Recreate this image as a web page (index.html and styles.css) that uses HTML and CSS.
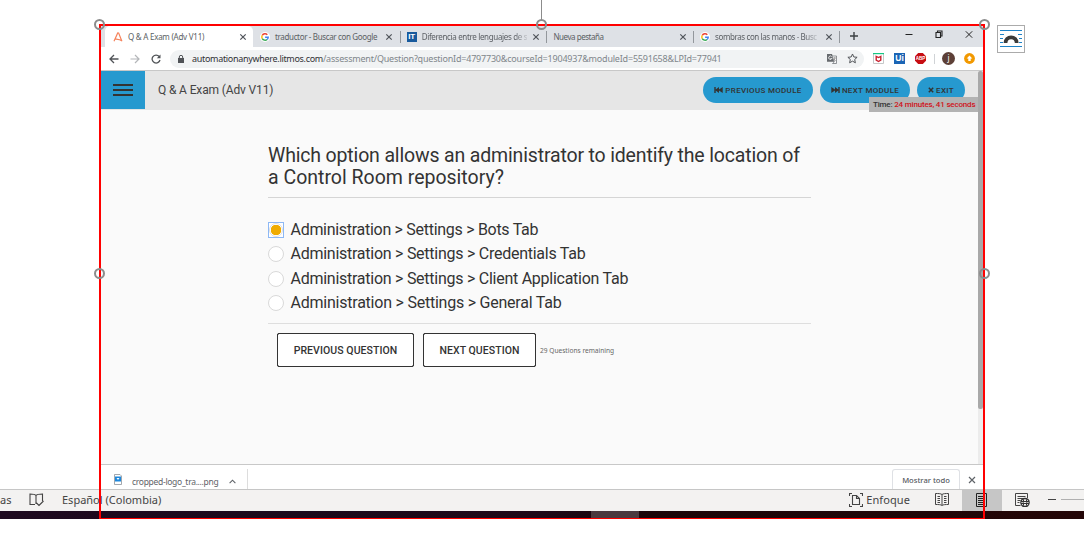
FILE: index.html
```
<!DOCTYPE html>
<html lang="es">
<head>
<meta charset="utf-8">
<title>Q &amp; A Exam (Adv V11)</title>
<link rel="stylesheet" href="styles.css">
</head>
<body>
<svg class="defs" width="0" height="0">
  <symbol id="close" viewBox="0 0 8 8"><path d="M1.3 1.3l5.4 5.4M6.7 1.3L1.3 6.7" fill="none" stroke="#50545a" stroke-width="1.2"/></symbol>
  <symbol id="google" viewBox="0 0 18 18">
    <circle cx="9" cy="9" r="9" fill="#fff"/>
    <g fill="none" stroke-width="2.6"><path d="M13.2 5A5.8 5.8 0 0 0 4 6.2" stroke="#ea4335"/><path d="M4 6.2a5.8 5.8 0 0 0 0 5.6" stroke="#fbbc05"/><path d="M4 11.8a5.8 5.8 0 0 0 8.8 1.6" stroke="#34a853"/><path d="M12.8 13.4A5.8 5.8 0 0 0 14.8 9.4H9.2" stroke="#4285f4"/></g>
  </symbol>
</svg>
<div class="screen">
  <main class="document">
    <div class="browser">
      <div class="tabs">
        <div class="tab active">
          <svg class="fav" viewBox="0 0 10 11"><path d="M.6 10.2L4.7 1l1 .1 3.6 9.1M1.5 7.6c3 .4 5.400.2 7.700 2.200" fill="none" stroke="#f5835c" stroke-width="1.3"/></svg>
          <span class="label t1">Q &amp; A Exam (Adv V11)</span><svg class="x"><use href="#close"/></svg>
        </div>
        <div class="tab sep">
          <svg class="fav"><use href="#google"/></svg>
          <span class="label t2">traductor - Buscar con Google</span><svg class="x"><use href="#close"/></svg>
        </div>
        <div class="tab sep">
          <span class="it">IT</span>
          <span class="label t3 fade">Diferencia entre lenguajes de s</span><svg class="x"><use href="#close"/></svg>
        </div>
        <div class="tab sep">
          <span class="label t4">Nueva pestaña</span><svg class="x"><use href="#close"/></svg>
        </div>
        <div class="tab sep last">
          <svg class="fav"><use href="#google"/></svg>
          <span class="label t5 fade">sombras con las manos - Busc</span><svg class="x"><use href="#close"/></svg>
        </div>
        <svg class="plus" viewBox="0 0 10 10"><path d="M5 1v8M1 5h8" stroke="#3c4043" stroke-width="1.4"/></svg>
        <div class="winbtns">
          <svg width="8" height="9" viewBox="0 0 8 9"><path d="M.5 4.500h7" stroke="#222" stroke-width="1"/></svg>
          <svg width="8" height="9" viewBox="0 0 8 9"><path d="M1 2.500h4.500v5H1zM2.500 2.500v-1.500h4.500v5H5.500" fill="none" stroke="#222" stroke-width="1.100"/></svg>
          <svg width="8" height="9" viewBox="0 0 8 9"><path d="M.8 1.300l6.400 6.400M7.200 1.300L.8 7.700" stroke="#222" stroke-width="1"/></svg>
        </div>
      </div>
      <div class="toolbar">
        <svg class="nav" viewBox="0 0 10 10"><path d="M9.500 5H1.200M5 1L1 5l4 4" fill="none" stroke="#505357" stroke-width="1.300"/></svg>
        <svg class="nav" viewBox="0 0 10 10"><path d="M.5 5h8.300M5 1l4 4-4 4" fill="none" stroke="#b4b6b9" stroke-width="1.200"/></svg>
        <svg class="nav" viewBox="0 0 10 10"><path d="M8.200 2.500A4 4 0 1 0 9 6" fill="none" stroke="#505357" stroke-width="1.300"/><path d="M9.500 .5v3.700H5.800z" fill="#505357"/></svg>
        <div class="omnibox">
          <svg class="lock" viewBox="0 0 6 8"><path d="M0 3h6v5H0z" fill="#505357"/><path d="M1.300 3.500V2a1.700 1.700 0 0 1 3.400 0v1.500" fill="none" stroke="#505357"/></svg>
          <span class="url"><b>automationanywhere.litmos.com</b>/assessment/Question?questionId=4797730&amp;courseId=1904937&amp;moduleId=5591658&amp;LPId=77941</span>
          <svg class="translate" viewBox="0 0 10 10"><path d="M0 0h5l2.400 7.800H0z" fill="#666a6e"/><path d="M5 2h4.500v7.500H5.500L7.300 8z" fill="#f7f7f7" stroke="#777b80" stroke-width=".8"/><path d="M4.700 2.700a1.700 1.700 0 1 0 .2 1.800H3.300" fill="none" stroke="#fff" stroke-width=".8"/><path d="M6.300 4h2.700M7.600 3.300c.2 1.700 0 2.800-1 3.600M6.800 5l1.900 2" fill="none" stroke="#777" stroke-width=".6"/></svg>
          <svg class="star" viewBox="0 0 10 10"><path d="M5 .9l1.200 2.700 3 .3L7 5.900l.6 3L5 7.400 2.400 8.900l.6-3L.8 3.900l3-.3z" fill="none" stroke="#505357" stroke-width=".9"/></svg>
        </div>
        <svg class="ext e1" viewBox="0 0 11 11"><path d="M.5 .5h10v10H.5z" fill="#fff" stroke="#b7babb" stroke-width=".8"/><path d="M0 0h11v1.200H0z" fill="#16c784"/><path d="M3.200 3.300v3.900l2.300 1.300 2.300-1.300V3.300L5.500 4.500z" fill="none" stroke="#c8202f" stroke-width="1.400"/></svg>
        <span class="ui">Ui</span>
        <svg class="ext e3" viewBox="0 0 11 11"><path d="M3.200 0h4.600L11 3.200v4.600L7.800 11H3.200L0 7.800V3.200z" fill="#c70d12"/><text x="5.500" y="7.300" class="abp">ABP</text></svg>
        <span class="bar"></span>
        <span class="avatar">j</span>
        <svg class="ext e4" viewBox="0 0 11 11"><circle cx="5.500" cy="5.500" r="5.400" fill="#f29900"/><path d="M5.500 2.500L8.300 5.500H6.700V8H4.300V5.500H2.700z" fill="#fff"/></svg>
      </div>
      <div class="page">
        <div class="header">
          <div class="burger"><i></i><i></i><i></i></div>
          <h1>Q &amp; A Exam (Adv V11)</h1>
          <div class="modules">
            <div class="pill p1"><svg viewBox="0 0 9 8"><path d="M.3 1h1.400v2.600L5 1v2.600L8.700 1v6L5 4.400V7L1.700 4.400V7H.3z"/></svg><span>PREVIOUS MODULE</span></div>
            <div class="pill p2"><svg viewBox="0 0 9 8"><path d="M8.700 1H7.300v2.600L4 1v2.600L.3 1v6L4 4.400V7l3.300-2.600V7h1.400z"/></svg><span>NEXT MODULE</span></div>
            <div class="pill p3"><svg class="ex" viewBox="0 0 6 8"><path d="M.8 1.800l4.400 4.400M5.200 1.800L.8 6.200" stroke="#333" stroke-width="1.500"/></svg><span>EXIT</span></div>
          </div>
          <div class="timer">Time: <b>24 minutes, 41 seconds</b></div>
        </div>
        <div class="quiz">
          <h2><span class="q1">Which option allows an administrator to identify the location of</span><br><span class="q2">a Control Room repository?</span></h2>
          <div class="answers">
            <label><span class="radio on"><i></i></span><span class="a1">Administration &gt; Settings &gt; Bots Tab</span></label>
            <label><span class="radio"></span><span class="a2">Administration &gt; Settings &gt; Credentials Tab</span></label>
            <label><span class="radio"></span><span class="a3">Administration &gt; Settings &gt; Client Application Tab</span></label>
            <label><span class="radio"></span><span class="a4">Administration &gt; Settings &gt; General Tab</span></label>
          </div>
          <div class="actions">
            <div class="btn b1"><span>PREVIOUS QUESTION</span></div>
            <div class="btn b2"><span>NEXT QUESTION</span></div>
            <span class="remaining">29 Questions remaining</span>
          </div>
        </div>
        <div class="scroll"><i></i></div>
      </div>
      <div class="downloads">
        <svg class="file" viewBox="0 0 8 11"><path d="M.5 .5h5.500l1.500 1.500v8.500H.5z" fill="#fff" stroke="#8b9299" stroke-width=".8"/><path d="M1 2.500h6v5H1z" fill="#1e88dc"/><path d="M2.500 4h3L4 6z" fill="#fff"/></svg>
        <span class="fname">cropped-logo_tra....png</span>
        <svg class="chev" viewBox="0 0 7 5"><path d="M.6 4.200L3.500 1.200l2.900 3" fill="none" stroke="#5f6368" stroke-width="1.100"/></svg>
        <span class="dsep"></span>
        <div class="showall"><span>Mostrar todo</span></div>
        <svg class="x dx" viewBox="0 0 8 8"><path d="M1 1l6 6M7 1L1 7" stroke="#5f6368" stroke-width="1.200"/></svg>
      </div>
    </div>
    <div class="layout-btn">
      <svg width="26" height="26" viewBox="0 0 26 26"><path d="M2 4.500h22M2 20.500h22M2 8.500h4M20 8.500h4M2 12.500h3M21 12.500h3M2 16.500h3M21 16.500h3" stroke="#1e83c8"/><path d="M7.500 17c0-3.500 2.500-5.700 5.600-5.700s5.600 2.200 5.600 5.700" fill="none" stroke="#3b3a39" stroke-width="3.800"/></svg>
    </div>
  </main>
  <div class="status">
    <span class="as">as</span>
    <svg class="proof" width="15" height="14" viewBox="0 0 15 14"><path d="M7 2.500C6 1 4 1 1 1v10.500h5M7 2.500V11M7 2.500C8 1 10 1 13.500 1v7M6.500 9l3.500 3.500L14.500 8" fill="none" stroke="#444" stroke-width="1.100"/></svg>
    <span class="lang">Español (Colombia)</span>
    <svg class="focus" width="14" height="14" viewBox="0 0 14 14"><path d="M3 .5H.5V3M11 .5h2.500V3M3 13.500H.5V11M11 13.500h2.500V11M3.500 2.500h4L10.500 5.500v6h-7zM7.500 2.500v3h3" fill="none" stroke="#444" stroke-width="1.100"/></svg>
    <span class="enf">Enfoque</span>
    <svg class="read" width="14" height="13" viewBox="0 0 14 13"><path d="M7 1.500C6 .5 3 .5 .5 .5v11c2.500 0 5.500 0 6.500 1 1-1 4-1 6.500-1V.5C11 .5 8 .5 7 1.500zV12M2.500 3.500H5M2.500 5.500H5M2.500 7.500H5M2.500 9.500H5M9 3.500h2.500M9 5.500h2.500M9 7.500h2.500M9 9.500h2.500" fill="none" stroke="#444"/></svg>
    <div class="print"><svg width="11" height="14" viewBox="0 0 11 14"><path d="M.5 .5h10v13H.5zM2 3.500h7M2 5.500h7M2 7.500h7M2 9.500h7M2 11.500h7" fill="none" stroke="#222"/></svg></div>
    <svg class="web" width="15" height="14" viewBox="0 0 15 14"><path d="M12.500 5V.5H.5v12h5M2.500 3.500h8M2.500 5.500h6M2.500 7.500h3M2.500 9.500h2" fill="none" stroke="#444"/><circle cx="10" cy="9.500" r="4.200" fill="#f3f2f1" stroke="#333" stroke-width="1.200"/><path d="M6 8.500h8M6 10.500h8" stroke="#333"/><ellipse cx="10" cy="9.500" rx="1.800" ry="4.200" fill="none" stroke="#333"/></svg>
    <span class="minus"></span><span class="slider"></span>
  </div>
  <div class="taskbar"><i></i></div>
  <div class="selection"><i class="stem"></i><i class="h tl"></i><i class="h tc"></i><i class="h tr"></i><i class="h ml"></i><i class="h mr"></i></div>
</div>
</body>
</html>
```
FILE: styles.css
```
* { box-sizing: border-box; }
body { margin: 0; background: #fff; font-family: "Noto Sans", "Open Sans", sans-serif; color: #444; overflow: hidden; }
svg, i { display: block; flex: none; }
.defs { position: absolute; }
span, h1, h2 { white-space: nowrap; }
.screen { position: relative; width: 1084px; height: 544px; display: flex; flex-direction: column; }
.document { height: 489px; display: flex; align-items: flex-start; padding-top: 25px; padding-left: 101px; }
.browser { width: 882px; height: 464px; display: flex; flex-direction: column; }

.tabs { height: 22px; background: #dee1e6; display: flex; padding-left: 4px; flex: none; }
.tab { width: 146.700px; display: flex; align-items: center; padding: 0 6.500px 0 7px; font-size: 8px; color: #5b5f64; flex: none; }
.tab.active { width: 148px; background: #fff; border-radius: 5px 5px 0 0; margin-top: 1px; padding-left: 8px; }
.tab.sep { padding-top: 1px; }
.tab.sep:not(:nth-child(2)) { background: linear-gradient(#93979c, #93979c) 0 6px / 1px 12px no-repeat; }
.tab.last { background: linear-gradient(#93979c, #93979c) 0 6px / 1px 12px no-repeat, linear-gradient(#93979c, #93979c) 100% 6px / 1px 12px no-repeat !important; }
.fav { width: 10px; height: 10px; margin-right: 5px; }
.label { line-height: 14px; }
.t1 { letter-spacing: -.25px; }
.t2 { letter-spacing: -.35px; }
.t3 { letter-spacing: -.34px; }
.t4 { letter-spacing: -.45px; }
.t5 { letter-spacing: -.4px; }
.fade { mask-image: linear-gradient(90deg, #000 88%, rgba(0, 0, 0, .2)); }
.x { width: 8px; height: 8px; margin-left: auto; }
.it { width: 10px; height: 10px; background: #185a9d; color: #fff; font: bold 8px/10px "Liberation Sans", sans-serif; text-align: center; margin-right: 5px; }
.plus { width: 10px; height: 10px; margin: 6px 0 0 9px; }
.winbtns { display: flex; gap: 22px; margin: 5px 10px 0 auto; }

.toolbar { height: 23px; background: #fff; display: flex; align-items: center; padding-left: 8px; flex: none; }
.nav { width: 10px; height: 10px; margin-right: 11px; }
.omnibox { width: 694px; height: 18px; margin-left: -2px; border-radius: 9px; background: #f1f3f4; display: flex; align-items: center; padding-left: 8px; }
.lock { width: 6px; height: 8px; margin-right: 8px; }
.url { font-size: 9px; color: #80868b; line-height: 16px; letter-spacing: -.2px; }
.url b { font-weight: 400; color: #303134; letter-spacing: -.31px; }
.translate { width: 10px; height: 10px; margin-left: auto; margin-right: 10px; }
.star { width: 11px; height: 11px; margin-right: 6px; }
.ext { width: 11px; height: 11px; }
.e1 { margin-left: 9px; }
.ui { width: 11px; height: 11px; background: #1b65b5; color: #fff; font: bold 8.500px/11px "Liberation Sans", sans-serif; text-align: center; margin: 0 10px; }
.abp { font: bold 4.600px "Liberation Sans", sans-serif; fill: #fff; text-anchor: middle; }
.bar { width: 1px; height: 10px; background: #d0d3d6; margin: 0 7px 0 8px; }
.avatar { width: 13px; height: 13px; border-radius: 50%; background: #5d4037; color: #fff; font-size: 8px; line-height: 12px; text-align: center; margin-right: 9px; }

.page { height: 394px; flex: none; display: grid; grid-template: 40px 1fr / 1fr 5px; background: #fafafa; border-top: 1px solid #c8c8c8; }
.header { position: relative; background: #e6e6e6; display: flex; font-family: Roboto, sans-serif; height: 39px; }
.burger { width: 44px; height: 38px; background: #2699cf; padding: 13px 12px; display: flex; flex-direction: column; gap: 3px; }
.burger i { height: 2px; width: 20px; background: #333; }
h1 { margin: 0 0 0 13px; font: 400 12px/38px Roboto, sans-serif; color: #444; letter-spacing: -.14px; }
.modules { margin: 6px 13px 0 auto; display: flex; gap: 7px; }
.pill { height: 26px; border-radius: 13px; background: #2699cf; color: #333; font-size: 8px; font-weight: 500; display: flex; align-items: center; justify-content: center; gap: 2px; letter-spacing: .32px; }
.pill svg { width: 9px; height: 8px; fill: #333; }
.pill .ex { width: 6px; }
.p1 { width: 110px; } .p2 { width: 90px; } .p3 { width: 48px; }
.timer { position: absolute; right: 0; top: 26px; width: 109px; height: 15px; background: #b3b3b3; font: 500 8px/15px Roboto, sans-serif; letter-spacing: -.18px; color: #333; padding-left: 4px; white-space: nowrap; }
.timer b { color: #d0131b; font-weight: 500; }
.scroll { grid-column: 2; grid-row: 1 / 3; background: #ececec; }
.scroll i { height: 338px; background: #a8a8a8; border-radius: 2px; }
.quiz { margin-left: 167px; width: 543px; padding-top: 34px; font-family: Roboto, sans-serif; color: #333; }
h2 { margin: 0; height: 53px; border-bottom: 1px solid #d5d5d5; font: 400 19.500px/21.500px Roboto, sans-serif; }
.q1 { letter-spacing: -.16px; }
.answers { padding-top: 20.500px; height: 126px; border-bottom: 1px solid #dedede; display: flex; flex-direction: column; gap: 2.600px; }
.answers label { height: 22px; display: flex; align-items: center; gap: 6.500px; font-size: 16px; line-height: 22px; flex: none; }
.a1 { letter-spacing: -.29px; }
.a2, .a3 { letter-spacing: -.26px; }
.a4 { letter-spacing: -.23px; }
.radio { width: 16px; height: 16px; border: 1px solid #d9d9d9; border-radius: 50%; background: #fff; }
.radio.on { border: 1px solid #8db8f5; border-radius: 0; display: flex; align-items: center; justify-content: center; }
.radio i { width: 14px; height: 14px; border-radius: 50%; border: 1px solid #ddd; background: radial-gradient(circle, #f0ab00 5px, #fff 5.500px); }
.actions { display: flex; align-items: center; padding: 9px 0 0 9px; }
.btn { height: 34px; border: 1px solid #333; outline: .5px solid #333; outline-offset: -1px; border-radius: 2px; background: #fff; font-size: 10.500px; font-weight: 500; letter-spacing: .07px; display: flex; align-items: center; justify-content: center; }
.b1 { width: 137px; margin-right: 9px; } .b2 { width: 113px; margin-right: 4px; }
.remaining { font: 6.600px "Noto Sans", sans-serif; color: #666; }

.downloads { height: 25px; flex: none; background: #fff; border-top: 1px solid #c8c8c8; display: flex; align-items: center; padding-left: 13px; }
.file { width: 8px; height: 11px; margin: 4px 10px 0 0; }
.fname { font-size: 8.500px; letter-spacing: -.3px; color: #5f6368; padding-top: 9px; }
.chev { width: 7px; height: 5px; margin: 8px 0 0 11px; }
.dsep { width: 1px; height: 20px; background: #ddd; margin: 4px 0 0 11px; }
.showall { width: 68px; height: 20px; margin: 4px 0 0 auto; border: 1px solid #dfe1e5; border-bottom: 0; border-radius: 3px 3px 0 0; font-size: 7.600px; font-weight: 500; color: #555960; display: flex; justify-content: center; align-items: center; }
.dx { margin: 6px 7px 0 8px; }

.layout-btn { width: 28px; height: 28px; border: 1px solid #ababab; margin-left: 14px; background: #fff; }
.status { height: 22px; background: #f3f2f1; border-top: 1px solid #c6c6c6; padding-bottom: 2px; display: flex; align-items: center; font-size: 11px; color: #444; }
.as { width: 29px; line-height: 16px; }
.proof { margin-right: 18px; margin-top: 1px; }
.focus { margin-left: auto; margin-right: 3px; }
.enf { margin-right: 25px; letter-spacing: .1px; }
.read { margin-right: 13px; }
.print { width: 40px; height: 21px; background: #c6c6c6; display: flex; align-items: center; justify-content: center; margin: 0 13px -2px 0; padding: 0 2px 2px 0; }
.minus { width: 8px; height: 1px; background: #444; margin-left: 18px; }
.slider { width: 23px; height: 1px; background: #b0b0b0; margin-left: 5px; }
.taskbar { height: 8px; background: linear-gradient(90deg, #1e0a20, #1d0817 50%, #1c0508 60%, #240607); padding-left: 591px; }
.taskbar i { width: 48px; height: 8px; background: #4b393e; }
.selection { position: absolute; left: 99px; top: 24px; width: 886px; height: 495px; border: 2px solid #f00; border-bottom-width: 1px; }
.h { position: absolute; width: 11px; height: 11px; border: 2px solid #8c8c8c; border-radius: 50%; background: transparent; }
.tl { left: -7px; top: -7px; } .tc { left: 435px; top: -7px; } .tr { left: 878px; top: -7px; }
.ml { left: -7px; top: 242px; } .mr { left: 878px; top: 242px; }
.stem { position: absolute; left: 440px; top: -26px; width: 1px; height: 20px; background: #8c8c8c; }
```
